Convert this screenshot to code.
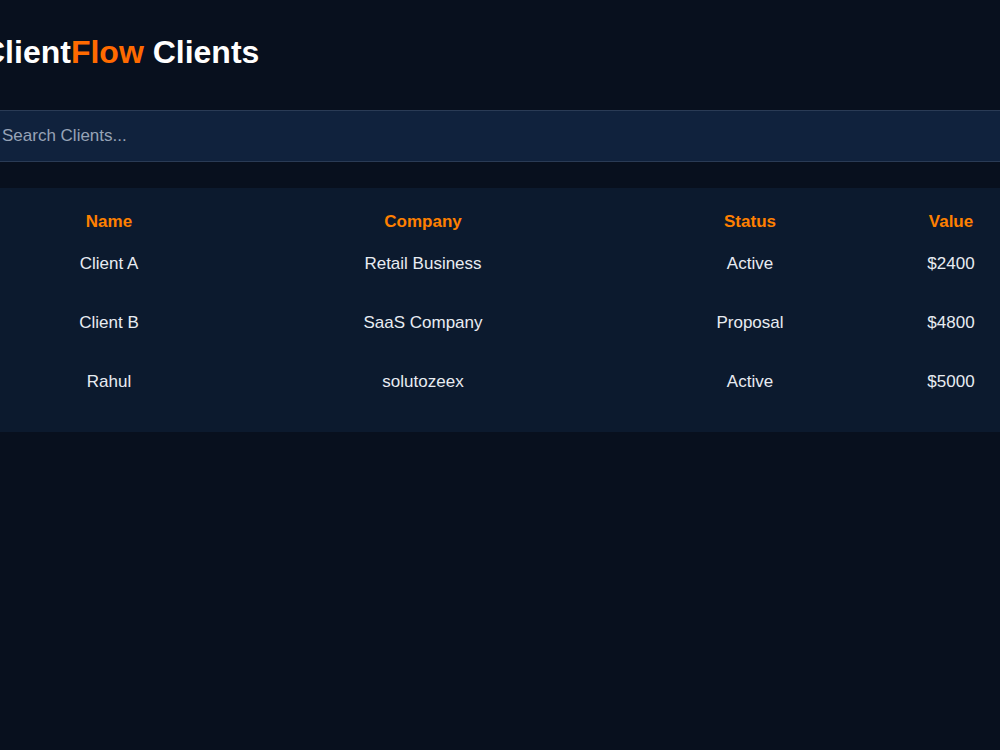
import * as React from 'react';

const clients = [
  { name: 'Client A', company: 'Retail Business', status: 'Active', value: 2400 },
  { name: 'Client B', company: 'SaaS Company', status: 'Proposal', value: 4800 },
  { name: 'Rahul', company: 'solutozeex', status: 'Active', value: 5000 },
];

const cols = 'grid grid-cols-[254px_374px_280px_122px]';

export default function App() {
  return (
    <div className="min-h-[750px] w-full overflow-hidden bg-[#08101e] font-['Liberation_Sans',Arial,sans-serif] text-[#e8ecf2]">
      <div className="ml-[-18px] w-[1034px] pt-[34px]">
        {/* Header */}
        <h1 className="text-[32px] font-bold leading-[37px] text-white">
          Client<span className="text-[#ff6a00]">Flow</span> Clients
        </h1>

        {/* Search */}
        <input
          type="text"
          placeholder="Search Clients..."
          className="mt-[39px] block h-[52px] w-full border border-[#2a3b55] bg-[#10223d] px-[19px] text-[17px] text-white outline-none placeholder:text-[#97a3b6]"
        />

        {/* Table */}
        <div className="mt-[26px] bg-[#0c1a2e] pt-[21px] pb-[21px]">
          <div className={`${cols} h-[25px] items-center text-center text-[17px] font-bold text-[#ff8000]`}>
            <div>Name</div>
            <div>Company</div>
            <div>Status</div>
            <div>Value</div>
          </div>
          {clients.map((c) => (
            <div key={c.name} className={`${cols} h-[59px] items-center text-center text-[17px]`}>
              <div>{c.name}</div>
              <div>{c.company}</div>
              <div>{c.status}</div>
              <div>${c.value}</div>
            </div>
          ))}
        </div>
      </div>
    </div>
  );
}
